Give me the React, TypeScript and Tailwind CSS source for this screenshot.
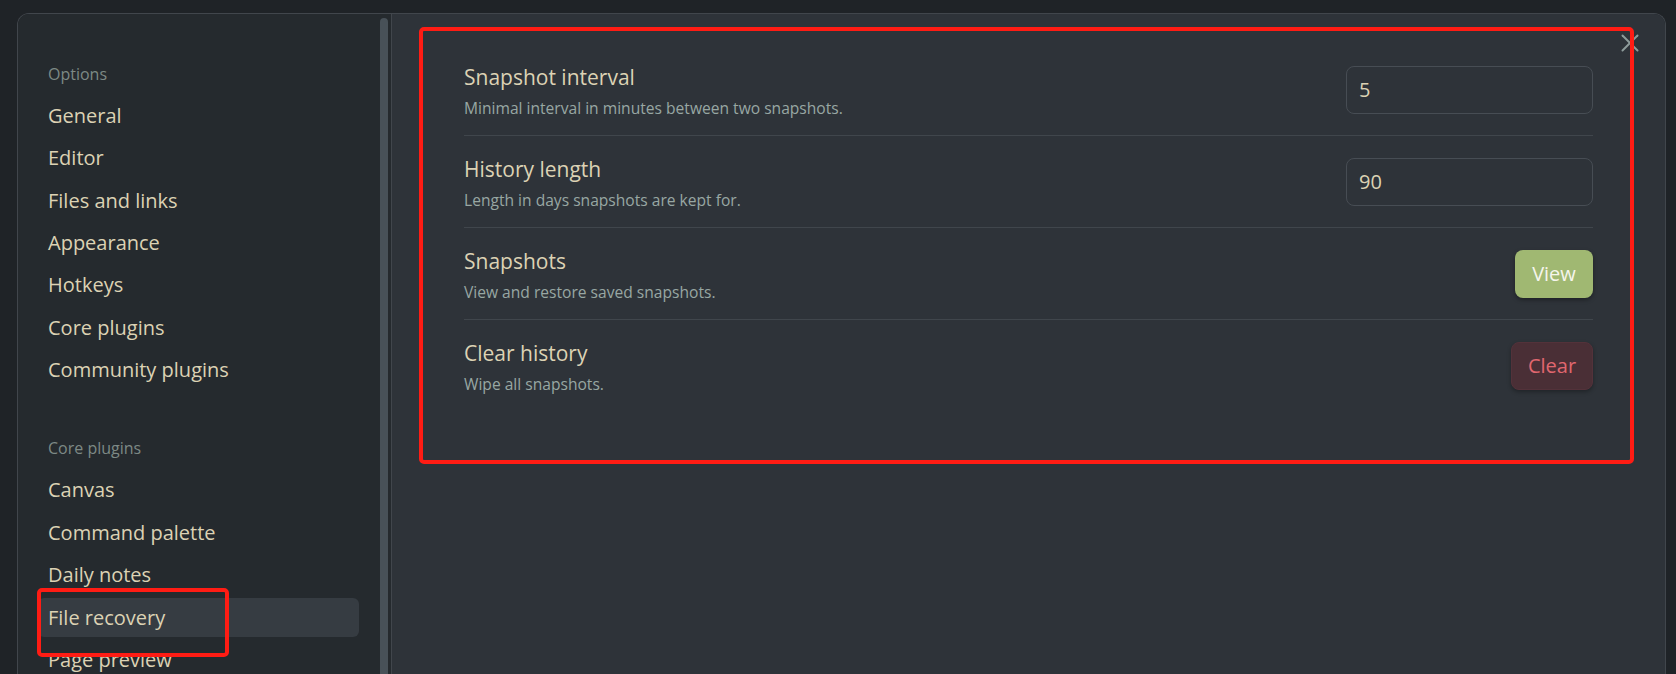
import { X } from "lucide-react";

const options = ["General", "Editor", "Files and links", "Appearance", "Hotkeys", "Core plugins", "Community plugins"];
const corePlugins = ["Canvas", "Command palette", "Daily notes", "File recovery", "Page preview"];

const NavItem = ({ label, active }: { label: string; active?: boolean }) => (
    <div
        className={`shrink-0 h-[39px] flex items-center px-[10px] rounded-[6px] text-[20px] text-[#dcd2b4] ${active ? "bg-[#363c42]" : ""}`}
    >
        {label}
    </div>
);

const SettingRow = ({
    title,
    desc,
    last,
    children,
}: {
    title: string;
    desc: string;
    last?: boolean;
    children: React.ReactNode;
}) => (
    <div className={`flex items-center justify-between pt-[19px] pb-[15px] ${last ? "" : "border-b border-[#40464c]"}`}>
        <div>
            <div className="h-[28px] leading-[28px] text-[21px] text-[#dcd2b4]">{title}</div>
            <div className="mt-[5px] h-[24px] leading-[24px] text-[15.6px] text-[#98a7a3]">{desc}</div>
        </div>
        <div className="mb-[4px]">{children}</div>
    </div>
);

const App = () => {
    return (
        <div
            className="relative h-[674px] w-full overflow-hidden bg-[#1f2327] pt-[13px] pl-[17px] pr-[10px]"
            style={{ fontFamily: '"Open Sans", "Noto Sans", sans-serif' }}
        >
            <div className="relative flex h-full rounded-t-[12px] border border-b-0 border-[#41464c] overflow-hidden">
                {/* sidebar */}
                <div className="flex w-[374px] bg-[#252a2e] border-r border-[#41464c]">
                    <div className="flex-1 overflow-hidden pt-[40px] pl-[20px] pr-[21px] flex flex-col gap-[3.4px]">
                        <div className="shrink-0 h-[39px] flex items-center px-[10px] text-[16px] text-[#7d8985]">Options</div>
                        {options.map((o) => (
                            <NavItem key={o} label={o} />
                        ))}
                        <div className="shrink-0 h-[32px]" />
                        <div className="shrink-0 h-[39px] flex items-center px-[10px] text-[16px] text-[#7d8985]">Core plugins</div>
                        {corePlugins.map((o) => (
                            <NavItem key={o} label={o} active={o === "File recovery"} />
                        ))}
                    </div>
                    <div className="w-[8px] mr-[3px] mt-[4px] rounded-t-full bg-[#485158]" />
                </div>

                {/* content */}
                <div className="flex-1 bg-[#2e3339] px-[72px] pt-[30px]">
                    <SettingRow title="Snapshot interval" desc="Minimal interval in minutes between two snapshots.">
                        <div className="w-[247px] h-[48px] rounded-[8px] border border-[#474d54] flex items-center px-[12px] text-[20px] text-[#dcd2b4]">
                            5
                        </div>
                    </SettingRow>
                    <SettingRow title="History length" desc="Length in days snapshots are kept for.">
                        <div className="w-[247px] h-[48px] rounded-[8px] border border-[#474d54] flex items-center px-[12px] text-[20px] text-[#dcd2b4]">
                            90
                        </div>
                    </SettingRow>
                    <SettingRow title="Snapshots" desc="View and restore saved snapshots.">
                        <button className="w-[78px] h-[48px] rounded-[8px] bg-[#a0b872] text-[20px] text-[#f5f5ec] shadow-[0_2px_4px_rgba(0,0,0,0.35)]">
                            View
                        </button>
                    </SettingRow>
                    <SettingRow title="Clear history" desc="Wipe all snapshots." last>
                        <button className="w-[82px] h-[48px] rounded-[8px] bg-[#4a2f36] border border-[#53323a] text-[20px] text-[#e0676f] shadow-[0_2px_4px_rgba(0,0,0,0.3)]">
                            Clear
                        </button>
                    </SettingRow>
                </div>

                <X className="absolute top-[14px] right-[20px] text-[#8e9c9b]" size={30} strokeWidth={1.6} />
            </div>

            {/* annotation boxes */}
            <div className="absolute left-[37px] top-[588px] w-[192px] h-[69px] border-[4px] border-[#ff1c14] rounded-[5px]" />
            <div className="absolute left-[419px] top-[27px] w-[1215px] h-[437px] border-[4px] border-[#ff1c14] rounded-[5px]" />
        </div>
    );
};

export default App;
